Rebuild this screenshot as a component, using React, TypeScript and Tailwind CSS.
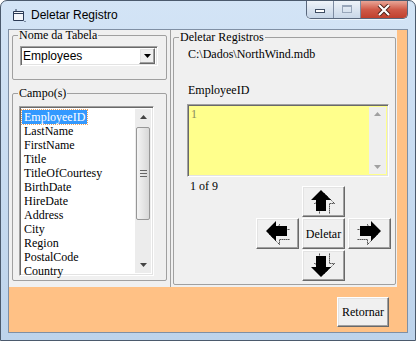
import React from "react";

const serif = "font-['Liberation_Serif','Times_New_Roman',serif]";
const sans = "font-['Liberation_Sans',Arial,sans-serif]";
const raised =
  "bg-[#f0f0f0] border border-t-white border-l-white border-r-[#696969] border-b-[#696969] shadow-[inset_-1px_-1px_0_#a0a0a0,inset_1px_1px_0_#e3e3e3]";
const sunken =
  "border border-t-[#a0a0a0] border-l-[#a0a0a0] border-r-white border-b-white shadow-[inset_1px_1px_0_#696969,inset_-1px_-1px_0_#e3e3e3]";

const FIELDS = [
  "EmployeeID",
  "LastName",
  "FirstName",
  "Title",
  "TitleOfCourtesy",
  "BirthDate",
  "HireDate",
  "Address",
  "City",
  "Region",
  "PostalCode",
  "Country",
];

const ARROW = "M10 1 L20 11 L15 11 L15 22 L5 22 L5 11 L0 11 Z";

const Arrow = ({ matrix }: { matrix?: string }) => (
  <svg width={25} height={25} viewBox="0 0 25 25">
    <g transform={matrix}>
      <path d={ARROW} transform="translate(3.5 3.5)" fill="none" stroke="#000" strokeDasharray="1 1" />
      <path d={ARROW} fill="#000" />
    </g>
  </svg>
);

const Tri = ({ up, color = "#444" }: { up?: boolean; color?: string }) => (
  <svg width={7} height={4} viewBox="0 0 7 4">
    <path d={up ? "M3.5 0 L7 4 L0 4 Z" : "M0 0 L7 0 L3.5 4 Z"} fill={color} />
  </svg>
);

const GroupBox = ({ title, className, children }: { title: string; className: string; children: React.ReactNode }) => (
  <fieldset className={`border border-[#a0a0a0] rounded-[2px] ${className}`}>
    <legend className={`${serif} ml-[5px] px-[1px] text-[12px] leading-[12px] text-black`}>{title}</legend>
    {children}
  </fieldset>
);

const NavButton = ({ children, className = "" }: { children: React.ReactNode; className?: string }) => (
  <div className={`${raised} h-[31px] flex items-center justify-center ${className}`}>{children}</div>
);

export default function App() {
  return (
    <div className="w-[416px] h-[341px] bg-white">
      <div className="h-full flex flex-col rounded-t-[7px] border border-[#4b5a6d] bg-gradient-to-b from-[#d3e4f6] to-[#bdd3eb] px-[7px] pb-[7px]">
        {/* title bar */}
        <div className="h-[28px] flex items-center">
          <svg width={14} height={13} viewBox="0 0 14 13" className="ml-[4px]">
            <path d="M1.5 2.5 H11.5 V11.5 H1.5 Z" fill="#f4f6fa" stroke="#2b3a55" />
            <path d="M1.5 4.5 H11.5" stroke="#2b3a55" />
            <path d="M3 1 H5 M12.5 12.5 H13.5" stroke="#2b3a55" />
          </svg>
          <span className={`${sans} ml-[5px] text-[12px] text-black`}>Deletar Registro</span>
          <div className="ml-auto self-start flex h-[18px] border border-t-0 border-[#59677c] rounded-b-[5px] overflow-hidden shadow-[0_1px_0_#ffffff99]">
            <div className="w-[27px] bg-gradient-to-b from-[#eef3f9] to-[#c5d4e6] border-r border-[#7d8ba1] flex items-start justify-center">
              <div className="w-[10px] h-[4px] mt-[8px] bg-white border border-[#3f4d63]" />
            </div>
            <div className="w-[27px] bg-gradient-to-b from-[#eef3f9] to-[#c9d7e8] border-r border-[#7d8ba1] flex items-start justify-center">
              <div className="w-[10px] h-[8px] mt-[4px] border border-[#98a6ba] border-t-2" />
            </div>
            <div className="w-[46px] bg-gradient-to-b from-[#e8a597] via-[#cf5a48] to-[#c0402d] flex items-center justify-center">
              <svg width={14} height={12} viewBox="0 0 14 12">
                <path d="M2 1 L12 11 M12 1 L2 11" stroke="#4a2018" strokeWidth={4} />
                <path d="M2 1 L12 11 M12 1 L2 11" stroke="#fff" strokeWidth={2.2} />
              </svg>
            </div>
          </div>
        </div>

        {/* client */}
        <div className="flex-1 flex flex-col border border-[#7f8fa4] bg-[#ffc185]">
          <div className="h-[257px] flex">
            {/* left panel */}
            <div className="w-[161px] bg-[#f0f0f0] flex flex-col">
              <GroupBox title="Nome da Tabela" className="ml-[3px] w-[155px] h-[51px] -mt-[1px]">
                <div className={`${sunken} ml-[7px] mt-[5px] w-[138px] h-[20px] bg-white flex items-center p-[2px]`}>
                  <span className={`${sans} flex-1 text-[12px] leading-[14px] text-black`}>Employees</span>
                  <div className={`${raised} w-[16px] h-[16px] flex items-center justify-center`}>
                    <Tri color="#000" />
                  </div>
                </div>
              </GroupBox>
              <GroupBox title="Campo(s)" className="ml-[3px] mt-[7px] w-[155px] h-[194px]">
                <div className={`${sunken} ml-[6px] mt-[7px] w-[135px] h-[170px] bg-white flex p-[2px]`}>
                  <div className="flex-1 flex flex-col items-start pt-[1px]">
                    {FIELDS.map((f, i) => (
                      <span
                        key={f}
                        className={`${serif} h-[14px] px-[2px] text-[12px] leading-[14px] ${
                          i === 0 ? "bg-[#3399ff] text-white outline outline-1 outline-dotted outline-[#e8a060]" : "text-black"
                        }`}
                      >
                        {f}
                      </span>
                    ))}
                  </div>
                  <div className="w-[16px] bg-[#ececec] flex flex-col items-center">
                    <div className="h-[16px] flex items-center justify-center">
                      <Tri up />
                    </div>
                    <div className="mt-[2px] w-[14px] h-[93px] rounded-[2px] border border-[#979797] bg-gradient-to-r from-[#f4f4f4] to-[#d8d8d8] flex flex-col items-center justify-center gap-[2px]">
                      <div className="w-[7px] h-[1px] bg-[#666]" />
                      <div className="w-[7px] h-[1px] bg-[#666]" />
                      <div className="w-[7px] h-[1px] bg-[#666]" />
                    </div>
                    <div className="mt-auto h-[16px] flex items-center justify-center">
                      <Tri />
                    </div>
                  </div>
                </div>
              </GroupBox>
            </div>

            {/* right panel */}
            <div className="w-[227px] bg-[#f0f0f0] border-l border-[#a0a0a0]">
              <GroupBox title="Deletar Registros" className="ml-[2px] mt-[1px] w-[223px] h-[254px]">
                <div className="flex flex-col">
                  <span className={`${serif} ml-[14px] mt-[4px] text-[12px] leading-[14px] text-black`}>
                    C:\Dados\NorthWind.mdb
                  </span>
                  <span className={`${serif} ml-[14px] mt-[22px] text-[12px] leading-[14px] text-black`}>EmployeeID</span>
                  <div className={`${sunken} ml-[13px] mt-[7px] w-[202px] h-[73px] bg-[#ffff8c] flex p-[2px]`}>
                    <span className={`${serif} flex-1 pl-[1px] text-[12px] leading-[14px] text-[#8a8a60]`}>1</span>
                    <div className="w-[17px] bg-[#eeeeee] flex flex-col items-center justify-between py-[5px]">
                      <Tri up color="#a0a0a0" />
                      <Tri color="#a0a0a0" />
                    </div>
                  </div>
                  <div className="flex items-start">
                    <span className={`${serif} ml-[16px] mt-[2px] w-[66px] text-[12px] leading-[14px] text-black`}>1 of 9</span>
                    <div className="mt-[9px] grid grid-cols-[43px_43px_43px] gap-x-[3px] gap-y-[1px]">
                      <div />
                      <NavButton>
                        <Arrow />
                      </NavButton>
                      <div />
                      <NavButton>
                        <Arrow matrix="matrix(0 1 1 0 0 0)" />
                      </NavButton>
                      <NavButton>
                        <span className={`${serif} text-[12px] text-black`}>Deletar</span>
                      </NavButton>
                      <NavButton>
                        <Arrow matrix="matrix(0 1 -1 0 25 0)" />
                      </NavButton>
                      <div />
                      <NavButton>
                        <Arrow matrix="matrix(1 0 0 -1 0 25)" />
                      </NavButton>
                      <div />
                    </div>
                  </div>
                </div>
              </GroupBox>
            </div>
            <div className="flex-1" />
          </div>

          {/* bottom strip */}
          <div className="flex-1 flex justify-end items-start pt-[10px] pr-[18px]">
            <div className={`${raised} w-[52px] h-[30px] flex items-center justify-center`}>
              <span className={`${serif} text-[12px] text-black`}>Retornar</span>
            </div>
          </div>
        </div>
      </div>
    </div>
  );
}
